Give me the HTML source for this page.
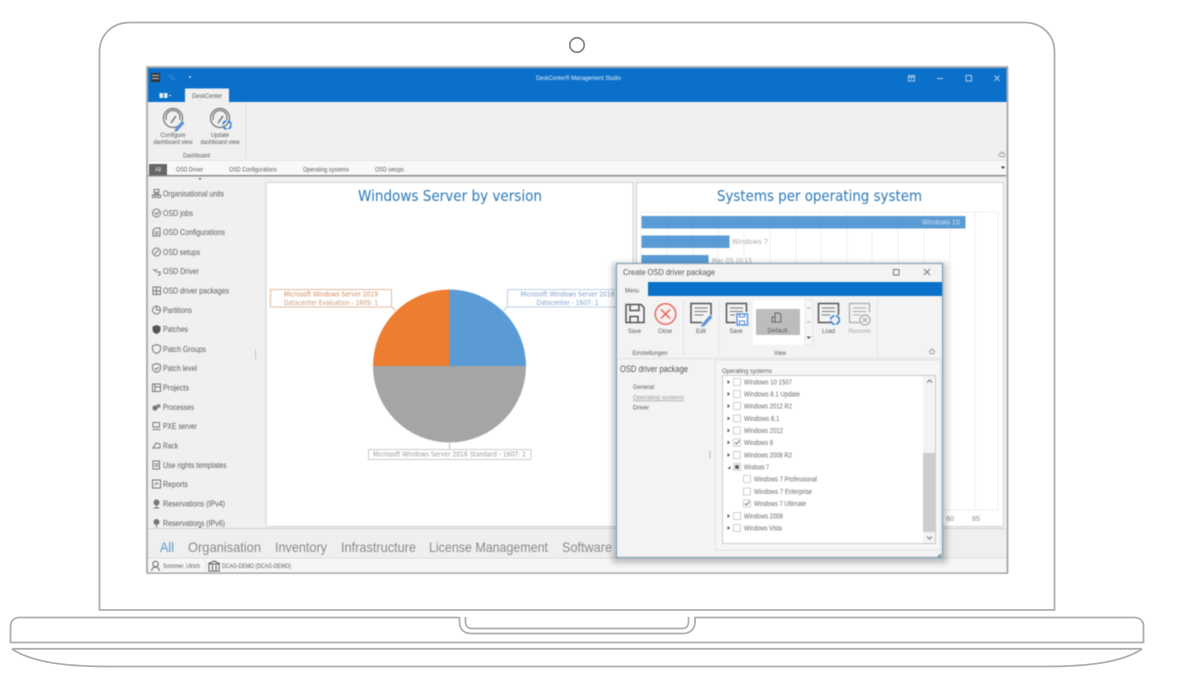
<!DOCTYPE html>
<html lang="en"><head><meta charset="utf-8"><title>DeskCenter Management Studio</title>
<style>
html,body{margin:0;padding:0;background:#fff;width:1200px;height:675px;overflow:hidden}
svg{display:block;font-family:"Liberation Sans",sans-serif}
.side{font-size:8.5px;fill:#5c5c5c}
.sm{font-size:6.5px;fill:#5c5c5c}
.os{font-size:7px;fill:#6a6a6a}
.ic{fill:none;stroke:#777;stroke-width:1}
.cb{fill:#fff;stroke:#c4c4c4;stroke-width:.8}
.nav{font-size:14px;fill:#8a8a8a}
.lab{font-size:7px;font-family:"DejaVu Sans",sans-serif}
.tc{text-anchor:middle}
.big{font-size:15.500px;fill:#2a79b9;font-family:"DejaVu Sans",sans-serif}
.bl{font-size:7px;font-family:"DejaVu Sans",sans-serif}
</style></head><body>
<svg width="1200" height="675" viewBox="0 0 1200 675" xmlns="http://www.w3.org/2000/svg">
<!-- laptop -->
<g fill="none" stroke="#aeaeae" stroke-width="1.800">
<path d="M99.500 610V52C99.500 35 112 22.500 130 22.500H1024C1042 22.500 1054.500 35 1054.500 52V610Z"/>
<circle cx="577" cy="45" r="7.200" stroke="#888"/>
<path d="M459 617.500H20C14 617.500 10.500 621 10.500 627V643"/>
<path d="M695 617.500H1134C1140 617.500 1143.500 621 1143.500 627V643"/>
<path d="M10.500 642.500H1143.500"/>
<path d="M12 648.800H1142"/>
<path d="M12 649C30 661 60 666.500 110 666.500H1044C1094 666.500 1124 661 1142 649"/>
<path d="M459.500 617V622C459.500 629 464 633.500 471 633.500H683C690 633.500 695 629 695 622V617"/>
<path d="M465.500 617V622C465.500 626 468 628.500 472 628.500H682C686 628.500 688.500 626 688.500 622V617"/>
</g>
<g style="filter:blur(.5px)">
<!-- screen -->
<rect x="147" y="67" width="860.500" height="506" fill="#f0f0f0" stroke="#999" stroke-width="1.500"/>
<rect x="148" y="68" width="858.500" height="34" fill="#0a70c9"/>
<rect x="185" y="88.500" width="44" height="13.500" fill="#f0f0f0"/>
<rect x="151" y="73" width="9" height="9" fill="#333"/><path d="M152 75.500h7M152 78.500h7" stroke="#ccc" stroke-width=".9"/>
<path d="M168 75l5 5M171 75l4 5" stroke="#2a80d0" stroke-width="1.500"/>
<circle cx="190" cy="77" r="1" fill="#cfe4f6"/>
<rect x="159.500" y="93" width="3.500" height="5" fill="#e6eff8"/><rect x="164" y="93" width="3.500" height="5" fill="#e6eff8"/><path d="M169 95.500h2" stroke="#e6eff8"/>
<text x="578.500" y="80" class="sm tc" style="fill:#e4eef8" textLength="85" lengthAdjust="spacingAndGlyphs">DeskCenter® Management Studio</text>
<text x="207" y="98" class="sm tc" textLength="30" lengthAdjust="spacingAndGlyphs">DeskCenter</text>
<g fill="none" stroke="#a9cdee" stroke-width="1">
<rect x="908.500" y="75.500" width="6" height="5.500"/><path d="M908.500 77h6M911.500 79.500v-2"/>
<path d="M937 78.500h6"/><rect x="966" y="75.500" width="5.500" height="5.500"/><path d="M994.500 75.500l5 5.500M999.500 75.500l-5 5.500"/>
</g>
<!-- ribbon -->
<g fill="none" stroke="#707070" stroke-width="1.200">
<circle cx="173" cy="118" r="9.500"/><path d="M166.500 120a7 7 0 1 1 13 0"/><path d="M171 123l5-7" stroke-width="1.500"/>
<circle cx="220" cy="118" r="9.500"/><path d="M213.500 120a7 7 0 1 1 13 0"/><path d="M218 123l5-7" stroke-width="1.500"/>
</g>
<path d="M175 129l7-8 2.500 2-7 8-3 1z" fill="#5b93d6"/>
<circle cx="227" cy="125" r="4" fill="none" stroke="#3d85d4" stroke-width="1.800" stroke-dasharray="5 1.500"/>
<text x="173" y="137" class="sm tc" textLength="25" lengthAdjust="spacingAndGlyphs">Configure</text>
<text x="173" y="144" class="sm tc" textLength="39" lengthAdjust="spacingAndGlyphs">dashboard view</text>
<text x="220" y="137" class="sm tc" textLength="18" lengthAdjust="spacingAndGlyphs">Update</text>
<text x="220" y="144" class="sm tc" textLength="39" lengthAdjust="spacingAndGlyphs">dashboard view</text>
<text x="196.500" y="157.500" class="sm tc" textLength="27" lengthAdjust="spacingAndGlyphs">Dashboard</text>
<path d="M246 104V158" stroke="#e0e0e0"/>
<path d="M148 160.500H1006" stroke="#e3e3e3"/>
<path d="M998.500 155l3.500-3 3.500 3M999 156.500h6" fill="none" stroke="#999"/>
<!-- tabs -->
<rect x="148" y="161" width="858" height="15" fill="#f8f8f8"/>
<rect x="149" y="164" width="18" height="11" fill="#666"/>
<rect x="148" y="175" width="858" height="1.500" fill="#8a8a8a"/>
<text x="158" y="171.500" class="sm tc" style="fill:#eee" textLength="6" lengthAdjust="spacingAndGlyphs">All</text>
<text x="176" y="171.500" class="sm" textLength="27" lengthAdjust="spacingAndGlyphs">OSD Driver</text>
<text x="229" y="171.500" class="sm" textLength="48" lengthAdjust="spacingAndGlyphs">OSD Configurations</text>
<text x="303" y="171.500" class="sm" textLength="46" lengthAdjust="spacingAndGlyphs">Operating systems</text>
<text x="375" y="171.500" class="sm" textLength="29" lengthAdjust="spacingAndGlyphs">OSD setups</text>
<path d="M1001 166.500h4l-2 2.500z" fill="#333"/>
<path d="M198.500 179.500h3l-1.500-2z" fill="#666"/>
<!-- sidebar -->
<g class="side">
<text x="163" y="196.500" textLength="61" lengthAdjust="spacingAndGlyphs">Organisational units</text>
<text x="163" y="216" textLength="30" lengthAdjust="spacingAndGlyphs">OSD jobs</text>
<text x="163" y="235" textLength="62" lengthAdjust="spacingAndGlyphs">OSD Configurations</text>
<text x="163" y="255" textLength="37" lengthAdjust="spacingAndGlyphs">OSD setups</text>
<text x="163" y="274" textLength="36" lengthAdjust="spacingAndGlyphs">OSD Driver</text>
<text x="163" y="293.500" textLength="66" lengthAdjust="spacingAndGlyphs">OSD driver packages</text>
<text x="163" y="313" textLength="29" lengthAdjust="spacingAndGlyphs">Partitions</text>
<text x="163" y="332" textLength="25" lengthAdjust="spacingAndGlyphs">Patches</text>
<text x="163" y="352" textLength="43" lengthAdjust="spacingAndGlyphs">Patch Groups</text>
<text x="163" y="371" textLength="34" lengthAdjust="spacingAndGlyphs">Patch level</text>
<text x="163" y="390.500" textLength="26" lengthAdjust="spacingAndGlyphs">Projects</text>
<text x="163" y="410" textLength="31" lengthAdjust="spacingAndGlyphs">Processes</text>
<text x="163" y="429" textLength="34" lengthAdjust="spacingAndGlyphs">PXE server</text>
<text x="163" y="448.500" textLength="15" lengthAdjust="spacingAndGlyphs">Rack</text>
<text x="163" y="468" textLength="63.500" lengthAdjust="spacingAndGlyphs">Use rights templates</text>
<text x="163" y="487" textLength="25" lengthAdjust="spacingAndGlyphs">Reports</text>
<text x="163" y="506.500" textLength="62" lengthAdjust="spacingAndGlyphs">Reservations (IPv4)</text>
<text x="163" y="526" textLength="62" lengthAdjust="spacingAndGlyphs">Reservations (IPv6)</text>
</g>
<g class="ic">
<path d="M154 189.500h5v3h-5zM152.500 195h3v2.500h-3zM157.500 195h3v2.500h-3zM156.500 192.500v1.500M154 194h5"/>
<circle cx="156.500" cy="213" r="4"/><path d="M154.500 212.500l2 2 2.500-3"/>
<path d="M153 230v6h7v-8h-4zM154.500 232h4M154.500 234h4"/>
<circle cx="156.500" cy="252" r="4"/><path d="M154.500 254l4-4"/>
<path d="M153 269l2 2 2-2M156 272h4v3h-2"/>
<rect x="153" y="287" width="7.500" height="7.500"/><path d="M153 291h7.500M156.500 287v7.500"/>
<circle cx="156.500" cy="310" r="4"/><path d="M156.500 306v4h4"/>
<path d="M156.500 344.500l4 1.500v3c0 2.500-2 3.800-4 4.500-2-.7-4-2-4-4.500v-3z"/>
<path d="M156.500 363.500l4 1.500v3c0 2.500-2 3.800-4 4.500-2-.7-4-2-4-4.500v-3z"/><path d="M154.800 368l1.500 1.500 2.300-2.500"/>
<rect x="152.500" y="384" width="8" height="7.500"/><path d="M155 384v7.500M155 387h5.500"/>
<rect x="153" y="422.500" width="6.500" height="4.500"/><path d="M152.500 429.500h8"/>
<path d="M153 448l3-5 4 1v4z"/>
<path d="M153 461h6.500v8H153zM154.500 464h4M154.500 466h4"/>
<rect x="152.500" y="480" width="8" height="8"/><path d="M154.500 485l2-2 2 1"/>
</g>
<path d="M156.500 325l4 1.500v3c0 2.500-2 3.800-4 4.500-2-.7-4-2-4-4.500v-3z" fill="#555"/>
<circle cx="155" cy="408" r="2.600" fill="#777"/><circle cx="158.500" cy="406" r="2" fill="#888"/>
<circle cx="156.500" cy="502.500" r="3" fill="#777"/><path d="M156.500 505v3M153.500 508h6" stroke="#777"/>
<circle cx="156.500" cy="522" r="3" fill="#777"/><path d="M156.500 525v2.500" stroke="#777"/>
<path d="M198.500 526.500h3l-1.500 2z" fill="#666"/>
<path d="M255.500 350v9" stroke="#888" stroke-dasharray="1 1.500"/>
<!-- panels -->
<rect x="266" y="182.500" width="367" height="344" fill="#fff" stroke="#d2d2d2"/>
<rect x="636.500" y="182.500" width="367" height="344" fill="#fff" stroke="#d2d2d2"/>
<text x="450" y="201" class="big tc" textLength="184" lengthAdjust="spacingAndGlyphs">Windows Server by version</text>
<text x="819.500" y="201" class="big tc" textLength="205" lengthAdjust="spacingAndGlyphs">Systems per operating system</text>
<!-- pie -->
<path d="M449.500 366V289.500A76.500 76.500 0 0 1 526 366Z" fill="#5b9bd5"/>
<path d="M449.500 366H373A76.500 76.500 0 0 1 449.500 289.500Z" fill="#ed7d31"/>
<path d="M373 366H526A76.500 76.500 0 0 1 373 366Z" fill="#a5a5a5"/>
<path d="M392 307l3.500 3.500" stroke="#d9b59b"/><path d="M507 307l-3.500 3.500" stroke="#b5c5dd"/><path d="M449.500 443v6" stroke="#bbb"/>
<rect x="270.500" y="289.500" width="121" height="17.500" fill="#fff" stroke="#e0bd9f"/>
<text x="331" y="296.500" class="lab tc" style="fill:#d98a5a" textLength="94" lengthAdjust="spacingAndGlyphs">Microsoft Windows Server 2019</text>
<text x="331" y="305" class="lab tc" style="fill:#c99a78" textLength="94" lengthAdjust="spacingAndGlyphs">Datacenter Evaluation - 1809: 1</text>
<rect x="507.500" y="289.500" width="120" height="17.500" fill="#fff" stroke="#bcd0e8"/>
<text x="567.500" y="296.500" class="lab tc" style="fill:#7f9fcc" textLength="94" lengthAdjust="spacingAndGlyphs">Microsoft Windows Server 2016</text>
<text x="567.500" y="305" class="lab tc" style="fill:#7f9fcc" textLength="62" lengthAdjust="spacingAndGlyphs">Datacenter - 1607: 1</text>
<rect x="368.500" y="449.500" width="162.500" height="10" fill="#fff" stroke="#ccc"/>
<text x="449.500" y="456.500" class="lab tc" style="fill:#999" textLength="153" lengthAdjust="spacingAndGlyphs">Microsoft Windows Server 2016 Standard - 1607: 2</text>
<!-- bar chart -->
<g stroke="#f0f0f0">
<path d="M641 212H998M641 510H998"/>
<path d="M641 212V510M667 212V510M693 212V510M718 212V510M744 212V510M770 212V510M796 212V510M821 212V510M847 212V510M872 212V510M898 212V510M924 212V510M950 212V510M975 212V510M998 212V510"/>
</g>
<rect x="641.500" y="216" width="324" height="12.500" fill="#5b9bd5"/>
<rect x="641.500" y="235.500" width="88" height="12.500" fill="#5b9bd5"/>
<rect x="641.500" y="255" width="67" height="12.500" fill="#5b9bd5"/>
<text x="922" y="224.500" class="bl" style="fill:#cfe0f1" textLength="38" lengthAdjust="spacingAndGlyphs">Windows 10</text>
<text x="732" y="244" class="bl" style="fill:#aaa" textLength="36" lengthAdjust="spacingAndGlyphs">Windows 7</text>
<text x="712" y="263" class="bl" style="fill:#aaa" textLength="40" lengthAdjust="spacingAndGlyphs">Mac OS 10.15</text>
<text x="950" y="521" class="os tc" style="fill:#888">60</text>
<text x="976" y="521" class="os tc" style="fill:#888">65</text>
<!-- bottom nav -->
<rect x="148" y="529" width="858" height="29" fill="#efefef"/>
<path d="M148 528.500H1006" stroke="#d0d0d0"/>
<text x="160" y="552" class="nav" style="fill:#5b96d0" textLength="14" lengthAdjust="spacingAndGlyphs">All</text>
<text x="188" y="552" class="nav" textLength="73" lengthAdjust="spacingAndGlyphs">Organisation</text>
<text x="275" y="552" class="nav" textLength="52" lengthAdjust="spacingAndGlyphs">Inventory</text>
<text x="341" y="552" class="nav" textLength="75" lengthAdjust="spacingAndGlyphs">Infrastructure</text>
<text x="429" y="552" class="nav" textLength="119" lengthAdjust="spacingAndGlyphs">License Management</text>
<text x="562" y="552" class="nav" textLength="50" lengthAdjust="spacingAndGlyphs">Software</text>
<rect x="148" y="558" width="858" height="14.500" fill="#f6f6f6"/>
<path d="M148 558H1006" stroke="#ddd"/>
<text x="163" y="568" class="sm" textLength="37" lengthAdjust="spacingAndGlyphs">Sommer, Ulrich</text>
<text x="222" y="568" class="sm" textLength="69" lengthAdjust="spacingAndGlyphs">DCAG-DEMO (DCAG-DEMO)</text>
<g fill="none" stroke="#666"><circle cx="155.500" cy="564" r="2.800"/><path d="M151.500 571c.5-3 2-4 4-4s3.500 1 4 4"/></g>
<path d="M209 561l6 3h-12zM204 565v5M207.500 565v5M211 565v5M214 565v5M203 571h12" fill="none" stroke="#555" transform="translate(5 0)"/>
<path d="M205.500 558v14" stroke="#e2e2e2"/>
<!-- dialog -->
<rect x="612" y="263" width="335" height="300" fill="#000" opacity=".22" style="filter:blur(3px)"/>
<rect x="616.500" y="263.500" width="326" height="294" fill="#f3f3f3" stroke="#7fa3b8" stroke-width="1.200"/>
<text x="623" y="275" style="font-size:8.500px;fill:#555" textLength="92" lengthAdjust="spacingAndGlyphs">Create OSD driver package</text>
<g fill="none" stroke="#777"><rect x="893.500" y="269.500" width="5.500" height="5.500"/><path d="M924 269l6 6M930 269l-6 6"/></g>
<rect x="648" y="282" width="294" height="14" fill="#0a70c9"/>
<text x="632" y="292.500" class="sm tc" textLength="14" lengthAdjust="spacingAndGlyphs">Menu</text>
<path d="M617 358.500H942" stroke="#e0e0e0"/>
<!-- dialog ribbon -->
<g fill="none" stroke="#555" stroke-width="1.500">
<path d="M626 304.500h15l3 3v15h-18z"/><path d="M630 304.500v6h9v-6M630 322.500v-6h8v6"/>
<path d="M711 315v-11.500h-20v19h11"/><path d="M694.500 308h13M694.500 311.500h13M694.500 315h9" stroke-width="1" stroke="#777"/>
<path d="M746.500 312v-8.500h-20v19h9"/><path d="M730 308h13M730 311.500h13M730 315h5" stroke-width="1" stroke="#777"/>
<path d="M838.500 315v-11.500h-20v19h12"/><path d="M822 308h13M822 311.500h13M822 315h8" stroke-width="1" stroke="#777"/>
</g>
<circle cx="665.500" cy="314" r="10.300" fill="#fbeeee" stroke="#e0665a" stroke-width="1.400"/>
<path d="M661 309.500l9 9M670 309.500l-9 9" stroke="#e0665a" stroke-width="1.500"/>
<path d="M702 324l8-9 2.500 2-8 9-3.500 1z" fill="#5b93d6"/>
<rect x="737" y="314" width="10.500" height="11" fill="#fff" stroke="#4a88d8" stroke-width="1.300"/><path d="M739.500 314v3h5v-3M739.500 325v-4h5v4" fill="none" stroke="#4a88d8"/>
<circle cx="835" cy="320" r="4.300" fill="#f0f0f0" stroke="#3d85d4" stroke-width="1.800" stroke-dasharray="5.500 1.500"/>
<g fill="none" stroke="#aaa" stroke-width="1.200"><path d="M869.500 312v-8.500h-20v19h10"/><path d="M853 308h13M853 311.500h13M853 315h8" stroke-width="1"/><circle cx="865" cy="320" r="5" fill="#f3f3f3"/><path d="M863 318l4 4M867 318l-4 4"/></g>
<text x="634.500" y="333" class="sm tc" textLength="13" lengthAdjust="spacingAndGlyphs">Save</text>
<text x="665" y="333" class="sm tc" textLength="14" lengthAdjust="spacingAndGlyphs">Close</text>
<text x="701" y="333" class="sm tc" textLength="10" lengthAdjust="spacingAndGlyphs">Edit</text>
<text x="736" y="333" class="sm tc" textLength="13" lengthAdjust="spacingAndGlyphs">Save</text>
<text x="828.500" y="333" class="sm tc" textLength="13" lengthAdjust="spacingAndGlyphs">Load</text>
<text x="859.500" y="333" class="sm tc" style="fill:#aaa" textLength="22" lengthAdjust="spacingAndGlyphs">Remove</text>
<rect x="753" y="300" width="52" height="45" fill="#fff"/>
<rect x="756" y="309" width="44" height="26" fill="#bdbdbd"/>
<path d="M775 313h4l2 2v7h-6zM772 317h3v5h-3z" fill="none" stroke="#666"/>
<text x="777.500" y="332.500" class="sm tc" textLength="20" lengthAdjust="spacingAndGlyphs">Default</text>
<rect x="805" y="300" width="7.500" height="45" fill="#f7f7f7" stroke="#ddd" stroke-width=".6"/>
<path d="M807 322h3.500M807 308h3.500" stroke="#aaa"/><path d="M806.500 336.500h4.500l-2.250 2.500z" fill="#555"/>
<text x="650" y="355" class="sm tc" textLength="35" lengthAdjust="spacingAndGlyphs">Einstellungen</text>
<text x="780" y="355" class="sm tc" textLength="12" lengthAdjust="spacingAndGlyphs">View</text>
<path d="M683.500 300V356M719 300V356M877.500 300V356" stroke="#e4e4e4"/>
<path d="M929 352l3-3 3 3M929.500 353.500h5" fill="none" stroke="#999"/>
<!-- dialog content -->
<text x="620" y="372" style="font-size:9px;fill:#555" textLength="68" lengthAdjust="spacingAndGlyphs">OSD driver package</text>
<text x="633" y="389" class="sm" textLength="21" lengthAdjust="spacingAndGlyphs">General</text>
<text x="633" y="399.500" class="sm" style="fill:#999;text-decoration:underline" textLength="51" lengthAdjust="spacingAndGlyphs">Operating systems</text>
<text x="633" y="409.500" class="sm" textLength="16" lengthAdjust="spacingAndGlyphs">Driver</text>
<path d="M710 451v8" stroke="#888" stroke-dasharray="1 1"/>
<rect x="715.500" y="360" width="225" height="190" fill="#f6f6f6" stroke="#e2e2e2"/>
<text x="722" y="373" class="sm" textLength="50" lengthAdjust="spacingAndGlyphs">Operating systems</text>
<rect x="722.500" y="375.500" width="213" height="168" fill="#fff" stroke="#ccc"/>
<rect x="923" y="376" width="12" height="167" fill="#f3f3f3"/>
<rect x="923" y="453" width="12" height="79" fill="#cdcdcd"/>
<path d="M927 382.500l2.500-2.500 2.500 2.500M927 536.500l2.500 2.500 2.500-2.500" fill="none" stroke="#777"/>
<g fill="#555">
<path d="M727.500 380l2.500 2-2.500 2zM727.500 392l2.500 2-2.500 2zM727.500 404l2.500 2-2.500 2zM727.500 416.500l2.500 2-2.500 2zM727.500 428.500l2.500 2-2.500 2zM727.500 440.500l2.500 2-2.500 2zM727.500 453l2.500 2-2.500 2zM727.500 514l2.500 2-2.500 2zM727.500 526l2.500 2-2.500 2z"/>
<path d="M730.500 466v3h-3z"/>
</g>
<g class="cb">
<rect x="733.500" y="378.500" width="7" height="7"/><rect x="733.500" y="390.500" width="7" height="7"/><rect x="733.500" y="402.500" width="7" height="7"/><rect x="733.500" y="415" width="7" height="7"/><rect x="733.500" y="427" width="7" height="7"/><rect x="733.500" y="439" width="7" height="7"/><rect x="733.500" y="451.500" width="7" height="7"/><rect x="733.500" y="463.500" width="7" height="7"/><rect x="743.500" y="475.500" width="7" height="7"/><rect x="743.500" y="488" width="7" height="7"/><rect x="743.500" y="500" width="7" height="7"/><rect x="733.500" y="512.500" width="7" height="7"/><rect x="733.500" y="524.500" width="7" height="7"/>
</g>
<rect x="735" y="465" width="4" height="4" fill="#666"/>
<path d="M735 442.500l1.500 1.500 3-3.500M745 503.500l1.500 1.500 3-3.500" fill="none" stroke="#777"/>
<g class="os">
<text x="744" y="384.500" textLength="48" lengthAdjust="spacingAndGlyphs">Windows 10 1507</text>
<text x="744" y="396.500" textLength="56" lengthAdjust="spacingAndGlyphs">Windows 8.1 Update</text>
<text x="744" y="408.500" textLength="48" lengthAdjust="spacingAndGlyphs">Windows 2012 R2</text>
<text x="744" y="421" textLength="35.500" lengthAdjust="spacingAndGlyphs">Windows 8.1</text>
<text x="744" y="433" textLength="39" lengthAdjust="spacingAndGlyphs">Windows 2012</text>
<text x="744" y="445" textLength="29" lengthAdjust="spacingAndGlyphs">Windows 8</text>
<text x="744" y="457.500" textLength="48" lengthAdjust="spacingAndGlyphs">Windows 2008 R2</text>
<text x="744" y="469.500" textLength="25" lengthAdjust="spacingAndGlyphs">Windows 7</text>
<text x="754" y="481.500" textLength="63" lengthAdjust="spacingAndGlyphs">Windows 7 Professional</text>
<text x="754" y="494" textLength="58" lengthAdjust="spacingAndGlyphs">Windows 7 Enterprise</text>
<text x="754" y="506" textLength="52" lengthAdjust="spacingAndGlyphs">Windows 7 Ultimate</text>
<text x="744" y="518.500" textLength="39" lengthAdjust="spacingAndGlyphs">Windows 2008</text>
<text x="744" y="530.500" textLength="38" lengthAdjust="spacingAndGlyphs">Windows Vista</text>
</g>
<path d="M941 553l-4 4h4z" fill="#888"/>
</g>
</svg>
</body></html>
